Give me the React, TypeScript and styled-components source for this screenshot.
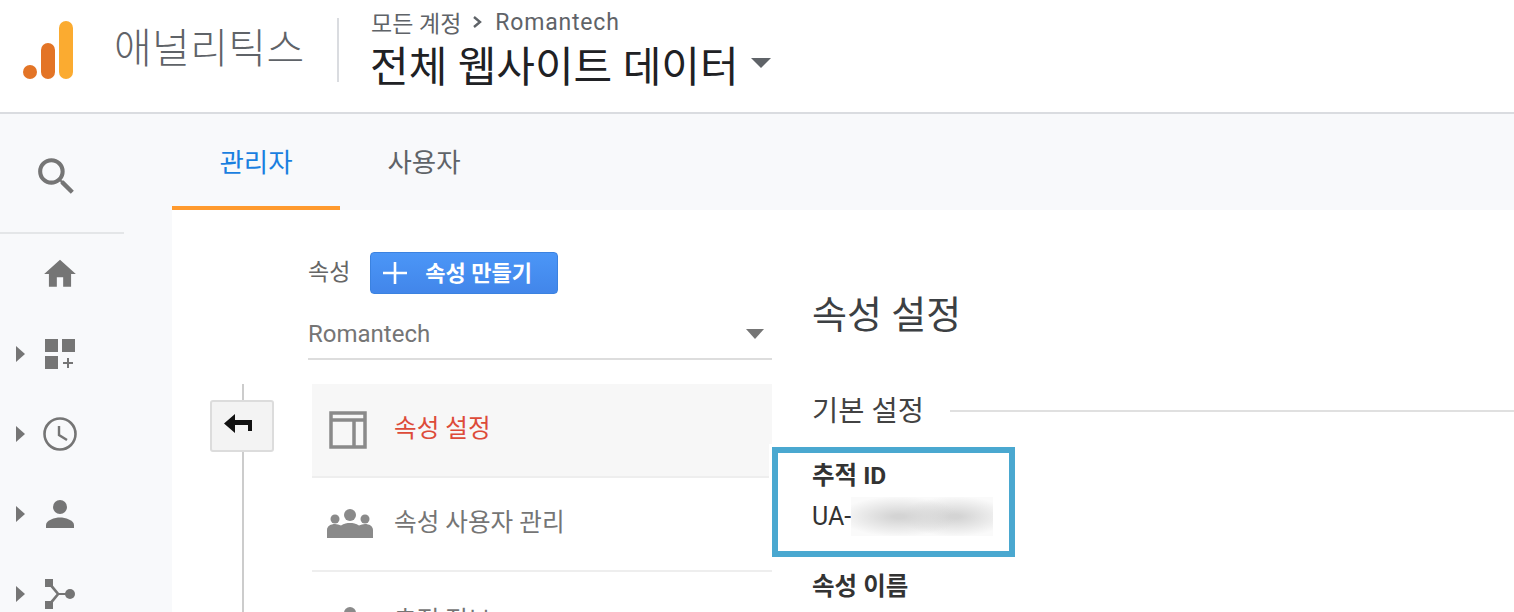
import React from 'react';
import styled, { createGlobalStyle } from 'styled-components';

const GlobalStyle = createGlobalStyle`
  html, body {
    margin: 0;
    padding: 0;
    height: 612px;
    overflow: hidden;
    background: #ffffff;
    font-family: Roboto, "Noto Sans CJK KR", sans-serif;
  }
  * { box-sizing: border-box; }
`;

const navItems = [
  { id: 'customization', icon: <DashboardPlusIcon /> },
  { id: 'realtime', icon: <ClockIcon /> },
  { id: 'audience', icon: <PersonIcon /> },
  { id: 'acquisition', icon: <ForkIcon /> },
];

export default function App() {
  return (
    <Page>
      <GlobalStyle />
      <Header>
        <LogoMark viewBox="0 0 50 58">
          <circle cx="7" cy="51" r="7" fill="#e37426" />
          <rect x="18" y="22" width="14" height="36" rx="7" fill="#e37426" />
          <rect x="36" y="0" width="14" height="58" rx="7" fill="#fbab30" />
        </LogoMark>
        <ProductName>애널리틱스</ProductName>
        <HeaderDivider />
        <ViewPicker>
          <Breadcrumb>
            모든 계정
            <svg width="14" height="14" viewBox="0 0 14 14">
              <path d="M3 2l6 5-6 5" fill="none" stroke="#5f6368" strokeWidth="2.4" />
            </svg>
            <CrumbLink>Romantech</CrumbLink>
          </Breadcrumb>
          <ViewName>
            전체 웹사이트 데이터
            <Caret $width={20} $height={10} $color="#5f6368" />
          </ViewName>
        </ViewPicker>
      </Header>

      <Body>
        <Sidebar>
          <SearchBlock>
            <svg width="49" height="49" viewBox="0 0 24 24" fill="#757575">
              <path d="M15.5 14h-.79l-.28-.27A6.471 6.471 0 0 0 16 9.5 6.5 6.5 0 1 0 9.5 16c1.61 0 3.09-.59 4.23-1.57l.27.28v.79l5 4.99L20.49 19l-4.99-5zm-6 0C7.01 14 5 11.99 5 9.5S7.01 5 9.5 5 14 7.01 14 9.5 11.99 14 9.5 14z" />
            </svg>
          </SearchBlock>
          <NavRow>
            <svg width="38" height="38" viewBox="0 0 24 24" fill="#757575">
              <path d="M10 20v-6h4v6h5v-8h3L12 3 2 12h3v8z" />
            </svg>
          </NavRow>
          {navItems.map((item) => (
            <NavRow key={item.id}>
              <NavArrow />
              {item.icon}
            </NavRow>
          ))}
        </Sidebar>

        <Main>
          <TabBar>
            <Tab $active>관리자</Tab>
            <Tab>사용자</Tab>
          </TabBar>

          <Content>
            <PropertyColumn>
              <PropertyHead>
                <LabelRow>
                  <PropertyLabel>속성</PropertyLabel>
                  <CreateButton>
                    <svg width="24" height="24" viewBox="0 0 24 24">
                      <path d="M12 1v22M0 12h24" stroke="#fff" strokeWidth="2.6" />
                    </svg>
                    <ButtonLabel>속성 만들기</ButtonLabel>
                  </CreateButton>
                </LabelRow>
                <SelectBox>
                  Romantech
                  <Caret $width={18} $height={10} $color="#757575" />
                </SelectBox>
              </PropertyHead>

              <MenuArea>
                <Rail>
                  <BackButton>
                    <svg width="28" height="19" viewBox="0 0 28 19">
                      <path d="M0 9.500L11 0v6h17v11h-4v-6H11v8z" fill="#111" />
                    </svg>
                  </BackButton>
                </Rail>
                <MenuList>
                  <MenuRow $active>
                    <LayoutIcon viewBox="0 0 38 38" fill="none" stroke="#8a8a8a" strokeWidth="3.5">
                      <rect x="2" y="2" width="34" height="34" />
                      <path d="M2 9h34M25 9v27" />
                    </LayoutIcon>
                    <MenuText $active>속성 설정</MenuText>
                  </MenuRow>
                  <MenuRow>
                    <MenuIcon><GroupIcon /></MenuIcon>
                    <MenuText>속성 사용자 관리</MenuText>
                  </MenuRow>
                  <MenuRow $tall>
                    <MenuIcon><GroupIcon /></MenuIcon>
                    <MenuText>추적 정보</MenuText>
                  </MenuRow>
                </MenuList>
              </MenuArea>
            </PropertyColumn>

            <SettingsColumn>
              <PageTitle>속성 설정</PageTitle>
              <SectionHead>
                <SectionName>기본 설정</SectionName>
                <SectionRule />
              </SectionHead>
              <Field>
                <FieldLabel>추적 ID</FieldLabel>
                <FieldValue>
                  UA-
                  <BlurredValue />
                </FieldValue>
              </Field>
              <FieldLabel>속성 이름</FieldLabel>
              <Highlight />
            </SettingsColumn>
          </Content>
        </Main>
      </Body>
    </Page>
  );
}

function DashboardPlusIcon() {
  return (
    <svg width="30" height="30" viewBox="0 0 30 30" fill="#757575">
      <rect x="0" y="0" width="13" height="13" />
      <rect x="17" y="0" width="13" height="13" />
      <rect x="0" y="17" width="13" height="13" />
      <path d="M22 19h2v4h4v2h-4v4h-2v-4h-4v-2h4z" />
    </svg>
  );
}

function ClockIcon() {
  return (
    <svg width="34" height="34" viewBox="0 0 34 34" fill="none" stroke="#757575">
      <circle cx="17" cy="17" r="15.500" strokeWidth="2.600" />
      <path d="M16 9v9l8 5" strokeWidth="2.400" />
    </svg>
  );
}

function PersonIcon() {
  return (
    <svg width="28" height="28" viewBox="0 0 28 28" fill="#757575">
      <circle cx="14" cy="7" r="7" />
      <path d="M0 28v-3c0-5 9-7.500 14-7.500s14 2.500 14 7.500v3z" />
    </svg>
  );
}

function ForkIcon() {
  return (
    <svg width="30" height="30" viewBox="0 0 30 30" fill="#757575">
      <rect x="0" y="0" width="8" height="8" />
      <rect x="0" y="22" width="8" height="8" />
      <circle cx="25" cy="15" r="5" />
      <path d="M5 3l9 11h10v2H14L5 27l-2-2 8.500-10L3 5z" />
    </svg>
  );
}

function GroupIcon() {
  return (
    <svg width="46" height="30" viewBox="0 0 46 30" fill="#8a8a8a">
      <circle cx="23" cy="6" r="6" />
      <circle cx="8" cy="10" r="4.500" />
      <circle cx="38" cy="10" r="4.500" />
      <path d="M0 29v-8c0-4 4-6 8-6 2 0 4 .5 6 1.500 3-2 6-2.500 9-2.500s6 .5 9 2.500c2-1 4-1.500 6-1.500 4 0 8 2 8 6v8z" />
    </svg>
  );
}

// --- Styled Components ---

const Page = styled.div`
  display: flex;
  flex-direction: column;
  height: 612px;
  overflow: hidden;
`;

const Header = styled.header`
  display: flex;
  align-items: flex-start;
  height: 114px;
  flex: none;
  border-bottom: 2px solid #dadce0;
  background: #ffffff;
`;

const LogoMark = styled.svg`
  width: 50px;
  height: 58px;
  margin: 21px 0 0 23px;
  flex: none;
`;

const ProductName = styled.div`
  margin: 22px 0 0 41px;
  width: 190px;
  font-size: 41px;
  line-height: 54px;
  font-weight: 300;
  letter-spacing: 0.4px;
  color: #5f6368;
  white-space: nowrap;
`;

const HeaderDivider = styled.div`
  width: 2px;
  height: 64px;
  margin: 18px 31px 0 33px;
  background: #dadce0;
`;

const ViewPicker = styled.div`
  display: flex;
  flex-direction: column;
  padding-top: 6px;
`;

const Breadcrumb = styled.div`
  display: flex;
  align-items: center;
  gap: 10px;
  height: 32px;
  margin-left: 1px;
  font-size: 23px;
  color: #5f6368;
  white-space: nowrap;
`;

const CrumbLink = styled.span`
  letter-spacing: 0.8px;
`;

const ViewName = styled.div`
  display: flex;
  align-items: center;
  gap: 12px;
  height: 54px;
  margin-top: -2px;
  font-size: 42px;
  color: #202124;
  white-space: nowrap;
`;

const Caret = styled.span<{ $width: number; $height: number; $color: string }>`
  display: inline-block;
  width: 0;
  height: 0;
  border-left: ${(p) => p.$width / 2}px solid transparent;
  border-right: ${(p) => p.$width / 2}px solid transparent;
  border-top: ${(p) => p.$height}px solid ${(p) => p.$color};
`;

const Body = styled.div`
  display: flex;
  flex: 1;
  min-height: 0;
`;

const Sidebar = styled.nav`
  width: 172px;
  flex: none;
  background: #f8f9fb;
`;

const SearchBlock = styled.div`
  display: flex;
  align-items: center;
  justify-content: center;
  width: 124px;
  height: 120px;
  padding: 6px 12px 0 0;
  border-bottom: 2px solid #e4e6e8;
  & > svg {
    margin-left: 1px;
  }
`;

const NavRow = styled.div`
  position: relative;
  display: flex;
  align-items: center;
  justify-content: center;
  width: 120px;
  height: 80px;
`;

const NavArrow = styled.span`
  position: absolute;
  left: 16px;
  top: 32px;
  width: 0;
  height: 0;
  border-top: 8.5px solid transparent;
  border-bottom: 8.5px solid transparent;
  border-left: 9px solid #757575;
`;

const Main = styled.main`
  display: flex;
  flex-direction: column;
  flex: 1;
  min-width: 0;
`;

const TabBar = styled.div`
  display: flex;
  height: 96px;
  flex: none;
  background: #f8f9fb;
`;

const Tab = styled.div<{ $active?: boolean }>`
  display: flex;
  align-items: center;
  justify-content: center;
  width: 168px;
  font-size: 26.5px;
  color: ${(p) => (p.$active ? '#1a7fe0' : '#5f6368')};
  border-bottom: 4px solid ${(p) => (p.$active ? '#ff9a2e' : 'transparent')};
`;

const Content = styled.div`
  display: flex;
  flex: 1;
  min-height: 0;
  background: #ffffff;
`;

const PropertyColumn = styled.div`
  width: 600px;
  flex: none;
`;

const PropertyHead = styled.div`
  margin-left: 136px;
  padding-top: 42px;
`;

const LabelRow = styled.div`
  display: flex;
  align-items: center;
  gap: 20px;
`;

const PropertyLabel = styled.span`
  font-size: 23px;
  line-height: 42px;
  color: #666666;
`;

const CreateButton = styled.button`
  display: flex;
  align-items: center;
  gap: 18px;
  width: 188px;
  height: 42px;
  padding: 0 0 0 12px;
  border: 1px solid #3b82e0;
  border-radius: 4px;
  background: linear-gradient(#4b96f7, #4286ea);
  color: #ffffff;
  font-family: inherit;
  font-size: 22px;
  font-weight: 700;
  white-space: nowrap;
`;

const ButtonLabel = styled.span`
  margin-bottom: 4px;
`;

const SelectBox = styled.div`
  display: flex;
  align-items: center;
  justify-content: space-between;
  height: 66px;
  padding: 16px 8px 0 0;
  border-bottom: 2px solid #dddddd;
  font-size: 24px;
  color: #757575;
`;

const MenuArea = styled.div`
  display: flex;
  height: 228px;
  margin-top: 24px;
  padding-left: 38px;
`;

const Rail = styled.div`
  position: relative;
  width: 64px;
  flex: none;
  margin-right: 38px;
  padding-top: 16px;

  &::before {
    content: '';
    position: absolute;
    left: 32px;
    top: 0;
    bottom: 0;
    width: 2px;
    background: #cccccc;
  }
`;

const BackButton = styled.div`
  position: relative;
  display: flex;
  align-items: center;
  justify-content: center;
  width: 64px;
  height: 52px;
  padding: 0 8px 5px 0;
  background: #f3f3f3;
  border: 2px solid #dcdcdc;
  border-radius: 3px;
`;

const MenuList = styled.div`
  flex: 1;
  min-width: 0;
`;

const MenuRow = styled.div<{ $active?: boolean; $tall?: boolean }>`
  display: flex;
  align-items: center;
  height: ${(p) => (p.$tall ? 102 : 94)}px;
  padding-bottom: 2px;
  background: ${(p) => (p.$active ? '#f7f7f7' : 'transparent')};
  border-bottom: 2px solid ${(p) => (p.$tall ? 'transparent' : '#eeeeee')};
`;

const MenuIcon = styled.div`
  display: flex;
  justify-content: center;
  width: 76px;
  flex: none;
  margin-top: 2px;
`;

const LayoutIcon = styled.svg`
  width: 38px;
  height: 38px;
  flex: none;
  margin: 2px 21px 0 17px;
`;

const MenuText = styled.span<{ $active?: boolean }>`
  margin: 0 0 6px 6px;
  font-size: 24.6px;
  color: ${(p) => (p.$active ? '#dd4b39' : '#757575')};
`;

const SettingsColumn = styled.div`
  position: relative;
  flex: 1;
  min-width: 0;
  padding: 78px 0 0 40px;
`;

const PageTitle = styled.h1`
  margin: 0;
  height: 54px;
  font-size: 38px;
  line-height: 54px;
  font-weight: 400;
  color: #3c4043;
`;

const SectionHead = styled.div`
  display: flex;
  align-items: center;
  gap: 26px;
  height: 44px;
  margin-top: 44px;
`;

const SectionName = styled.h2`
  margin: 0;
  font-size: 28.5px;
  font-weight: 400;
  color: #424242;
  white-space: nowrap;
`;

const SectionRule = styled.div`
  flex: 1;
  height: 2px;
  margin-top: 6px;
  background: #e0e0e0;
`;

const Field = styled.div`
  padding-top: 28px;
  margin-bottom: 33px;
`;

const FieldLabel = styled.div`
  height: 36px;
  font-size: 24.5px;
  line-height: 36px;
  font-weight: 700;
  color: #333333;
`;

const FieldValue = styled.div`
  display: flex;
  align-items: center;
  height: 40px;
  margin-top: 2px;
  font-size: 25px;
  color: #333333;
`;

const BlurredValue = styled.div`
  width: 142px;
  height: 39px;
  background:
    radial-gradient(ellipse 60px 20px at 48px 50%, #d4d4d4 10%, transparent),
    radial-gradient(ellipse 55px 20px at 104px 50%, #d4d4d4 10%, transparent),
    #fafafa;
`;

const Highlight = styled.div`
  position: absolute;
  left: 0;
  top: 237px;
  width: 243px;
  height: 110px;
  border: 6px solid #4aa8d0;
  box-shadow: 0 0 0 3px #ffffff;
`;
